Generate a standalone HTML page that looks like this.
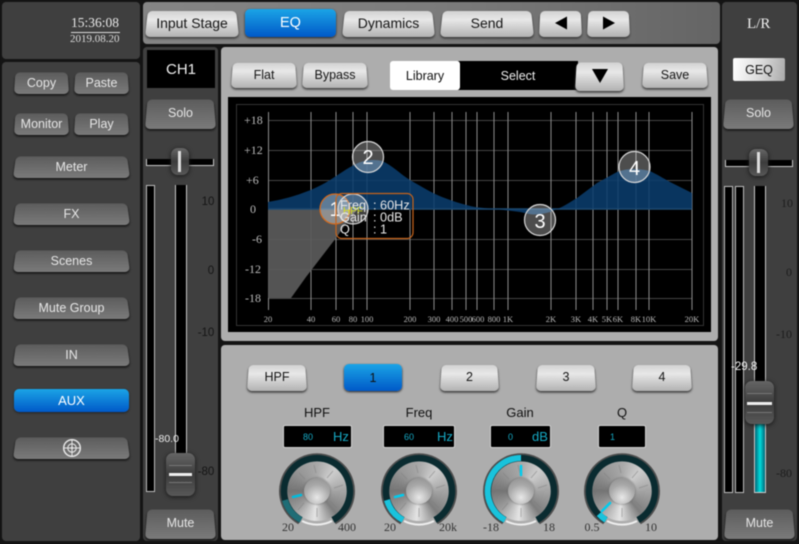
<!DOCTYPE html>
<html><head><meta charset="utf-8"><style>
html,body{margin:0;padding:0;background:#141414}
body{position:relative;width:799px;height:544px;overflow:hidden;font-family:"Liberation Sans",sans-serif;filter:blur(.4px)}
.p{position:absolute;border-radius:4px;background:#3f3f3f}
.l{background:#adadad}
.b{position:absolute;display:flex;align-items:center;justify-content:center;color:#e6e6e6;font-size:12.5px;z-index:1}
.b::before{content:"";position:absolute;inset:0;z-index:-1;border-radius:5px;background:linear-gradient(#5c5c5c,#7a7a7a);box-shadow:0 1.5px 2px #111;transform:perspective(60px) rotateX(8deg);transform-origin:bottom}
.w{color:#151515;font-size:14px}
.w::before{background:linear-gradient(#d2d2d2,#e8e8e8 35%,#b2b2b2);box-shadow:0 1.5px 2px #333}
.blue{color:#fff;border-radius:5px;background:linear-gradient(#1ba4e6,#0059c8);box-shadow:0 1px 2px #222}
.blue::before,.g::before{display:none}
.t{position:absolute;white-space:nowrap}
.s{font-family:"Liberation Serif",serif}
.pan{position:absolute;background:#000;border:1px solid #c8c8c8;border-top:0;box-sizing:border-box}
.tr{position:absolute;background:#000;border:solid #c8c8c8;border-width:0 1px;box-sizing:border-box}
.m{position:absolute;background:#000;border:1px solid #bcbcbc;box-sizing:border-box}
.sc{font-size:12px;color:#333;font-family:"Liberation Serif",serif;position:absolute;width:40px;text-align:center}
.sl{font-size:11.5px;color:#151515;font-family:"Liberation Sans",sans-serif}
.sr{color:#1c1c1c}
.th{position:absolute;border-radius:7px;background:linear-gradient(#666,#3c3c3c 50%,#585858);box-shadow:0 1px 5px #161616}
.d{position:absolute;background:#000;border:1px solid #cfcfcf;border-radius:2px;box-sizing:border-box;height:23px;color:#16a9c4}
.lab{position:absolute;font-size:13px;color:#111;text-align:center;width:60px}
.kn{position:absolute;width:60px;height:60px;border-radius:50%;background:conic-gradient(#a8a8a8,#cdcdcd 40deg,#9c9c9c 100deg,#7e7e7e 140deg,#e4e4e4 185deg,#9a9a9a 230deg,#747474 270deg,#989898 320deg,#a8a8a8)}
.kn::after{content:"";position:absolute;left:17px;top:17px;width:26px;height:26px;border-radius:50%;background:radial-gradient(circle at 50% 75%,#e8e8e8,#a8a8a8 55%,#8c8c8c);box-shadow:0 0 2px #666}
.ks{position:absolute;width:84px;height:84px}
</style></head><body>
<div class="p" style="left:2px;top:2px;width:138px;height:57px"></div>
<div class="t s" style="left:71px;top:15px;font-size:13.5px;color:#e8e8e8">15:36:08</div>
<div style="position:absolute;left:71px;top:32px;width:49px;height:1px;background:#ddd"></div>
<div class="t s" style="left:70px;top:33px;font-size:11px;color:#ddd">2019.08.20</div>
<div class="p" style="left:2px;top:62px;width:138px;height:479px"></div>
<div class="b" style="left:14px;top:71px;width:55px;height:23px">Copy</div>
<div class="b" style="left:74px;top:71px;width:55px;height:23px">Paste</div>
<div class="b" style="left:14px;top:112px;width:55px;height:23px">Monitor</div>
<div class="b" style="left:74px;top:112px;width:55px;height:23px">Play</div>
<div class="b" style="left:13px;top:155px;width:117px;height:23px">Meter</div>
<div class="b" style="left:13px;top:202px;width:117px;height:23px">FX</div>
<div class="b" style="left:13px;top:249px;width:117px;height:23px">Scenes</div>
<div class="b" style="left:13px;top:296px;width:117px;height:23px">Mute Group</div>
<div class="b" style="left:13px;top:343px;width:117px;height:23px">IN</div>
<div class="b blue" style="left:14px;top:389px;width:115px;height:23px;font-size:13px">AUX</div>
<div class="b" style="left:13px;top:436px;width:117px;height:23px">
<svg width="20" height="20" viewBox="0 0 20 20" fill="none" stroke="#e6e6e6"><circle cx="10" cy="10" r="8.3" stroke-width="1.5"/><circle cx="10" cy="10" r="4.2" stroke-width="1.1"/><path d="M10 1v18M1 10h18" stroke-width="1"/><circle cx="10" cy="10" r="1.2" fill="#e6e6e6" stroke="none"/></svg></div>

<div class="p" style="left:143px;top:2px;width:577px;height:42px;background:linear-gradient(90deg,#858585,#7c7c7c 50%,#656565)"></div>
<div class="b w" style="left:145px;top:9px;width:94px;height:28px">Input Stage</div>
<div class="b blue" style="left:245px;top:9px;width:91px;height:28px;font-size:14.5px">EQ</div>
<div class="b w" style="left:342px;top:9px;width:93px;height:28px">Dynamics</div>
<div class="b w" style="left:440px;top:9px;width:94px;height:28px">Send</div>
<div class="b w" style="left:539px;top:9px;width:43px;height:28px"><svg width="14" height="14"><path d="M1 7L13 0.5V13.5Z" fill="#000"/></svg></div>
<div class="b w" style="left:587px;top:9px;width:43px;height:28px"><svg width="14" height="14"><path d="M13 7L1 0.5V13.5Z" fill="#000"/></svg></div>

<div class="p" style="left:143px;top:47px;width:75px;height:494px"></div>
<div style="position:absolute;left:147px;top:50px;width:68px;height:38px;background:#000;color:#eee;font-size:15px;display:flex;align-items:center;justify-content:center">CH1</div>
<div class="b" style="left:145px;top:97px;width:71px;height:32px">Solo</div>
<div class="pan" style="left:146px;top:159px;width:68px;height:7px"></div>
<div class="th" style="left:171px;top:148px;width:18px;height:27px"></div>
<div style="position:absolute;left:178px;top:151px;width:3px;height:21px;background:#ddd"></div>
<div class="m" style="left:146px;top:185px;width:9px;height:307px"></div>
<div class="tr" style="left:175px;top:185px;width:12px;height:270px"></div>
<div class="t" style="left:155px;top:433px;font-size:10.5px;color:#eee">-80.0</div>
<div class="sc sl" style="left:188px;top:196px">10</div>
<div class="sc sl" style="left:191px;top:265px">0</div>
<div class="sc sl" style="left:186px;top:327px">-10</div>
<div class="sc sl" style="left:186px;top:466px">-80</div>
<div class="th" style="left:166px;top:453px;width:29px;height:43px"></div>
<div style="position:absolute;left:169px;top:473px;width:23px;height:3px;background:#eee"></div>
<div style="position:absolute;left:169px;top:465px;width:23px;height:1px;background:#777"></div>
<div style="position:absolute;left:169px;top:482px;width:23px;height:1px;background:#777"></div>
<div class="b" style="left:145px;top:507px;width:71px;height:32px">Mute</div>

<div class="p l" style="left:221px;top:47px;width:497px;height:294px"></div>
<div class="b w" style="left:231px;top:61px;width:66px;height:27px;font-size:12.5px">Flat</div>
<div class="b w" style="left:302px;top:61px;width:66px;height:27px;font-size:12.5px">Bypass</div>
<div style="position:absolute;left:390px;top:61px;width:70px;height:29px;background:#fff;border-radius:3px;color:#111;font-size:12.5px;display:flex;align-items:center;justify-content:center;z-index:1">Library</div>
<div style="position:absolute;left:458px;top:61px;width:120px;height:29px;background:#000;color:#eee;font-size:12.5px;display:flex;align-items:center;justify-content:center">Select</div>
<div class="b w" style="left:575px;top:60px;width:49px;height:31px"><svg width="18" height="16"><path d="M1 1H17L9 15Z" fill="#000"/></svg></div>
<div class="b w" style="left:642px;top:61px;width:66px;height:27px;font-size:12.5px">Save</div>

<svg style="position:absolute;left:228px;top:97px" width="483" height="235" viewBox="228 97 483 235">
<rect x="228" y="97" width="483" height="235" fill="#000"/>
<rect x="236.5" y="104.5" width="467" height="221" fill="none" stroke="#333"/>
<g stroke="#444" stroke-width="1">
<path d="M268 120.5H692M268 150.5H692M268 180.5H692M268 239.5H692M268 269.5H692M268 298.5H692"/>
</g>
<g stroke="#8c8c8c" stroke-width="1">
<path d="M268.5 112V310M311 112V310M336 112V310M353 112V310M367 112V310M410 112V310M434 112V310M452 112V310M466 112V310M477 112V310M494 112V310M508 112V310M551 112V310M576 112V310M593 112V310M607 112V310M618 112V310M636 112V310M649 112V310M692 112V310"/>
</g>
<path d="M268 209V298H291L306 277L336 238L350 218L358 209Z" fill="#5a5a5a" fill-opacity=".93"/>
<path d="M268 209V202C285 199 305 194 325 183C337 176 347 168 358 163C365 160 375 159 382 161C392 165 400 174 410 180C422 187 432 193 442 197C455 202 465 205 475 207L493 209C505 210 512 211 520 212C526 213 530 214.5 534 214.5C540 214.5 546 213 550 212L557 209C565 206 570 202 577 198L597 183L617 172C622 170 628 169 633 169C640 169 645 170 650 171C658 175 663 178 670 182L692 193V209Z" fill="#0a3c6c" fill-opacity=".88"/>
<path d="M268 209H692" stroke="#1d4a72" stroke-width="1.5"/>
<g font-family="Liberation Serif,serif" font-size="12" fill="#bbb">
<text x="244" y="124">+18</text><text x="244" y="154">+12</text><text x="246" y="184">+6</text><text x="250" y="213">0</text><text x="252" y="243">-6</text><text x="245" y="273">-12</text><text x="245" y="302">-18</text>
</g>
<g font-family="Liberation Serif,serif" font-size="8.5" fill="#b8b8b8" text-anchor="middle">
<text x="268" y="322">20</text><text x="311" y="322">40</text><text x="336" y="322">60</text><text x="353" y="322">80</text><text x="367" y="322">100</text><text x="410" y="322">200</text><text x="434" y="322">300</text><text x="452" y="322">400</text><text x="466" y="322">500</text><text x="478" y="322">600</text><text x="494" y="322">800</text><text x="508" y="322">1K</text><text x="551" y="322">2K</text><text x="576" y="322">3K</text><text x="593" y="322">4K</text><text x="607" y="322">5K</text><text x="618" y="322">6K</text><text x="636" y="322">8K</text><text x="649" y="322">10K</text><text x="692" y="322">20K</text>
</g>
<g fill="#fff" fill-opacity=".3" stroke="#d8d8d8" stroke-width="1.2">
<circle cx="368" cy="157" r="15.5"/><circle cx="540" cy="220" r="15.5"/><circle cx="634.5" cy="167" r="15.5"/>
</g>
<g fill="#fff" font-size="20" text-anchor="middle"><text x="368" y="164">2</text><text x="540" y="228">3</text><text x="634.5" y="175">4</text></g>
<circle cx="335" cy="209" r="15" fill="#fff" fill-opacity=".35" stroke="#d86a1a" stroke-width="1.2"/>
<text x="335" y="216" fill="#fff" font-size="20" text-anchor="middle">1</text>
<circle cx="353" cy="209" r="15" fill="#fff" fill-opacity=".25" stroke="#d8d8d8" stroke-width="1.2"/>
<text x="353" y="214" fill="#d8e21a" font-size="10" text-anchor="middle">HPF</text>
<rect x="336" y="193.5" width="77" height="45" rx="6" fill="none" stroke="#c8641a" stroke-width="1.2"/>
<g fill="#e8e8e8" font-size="12.7"><text x="340" y="209.5">Freq</text><text x="340" y="221.5">Gain</text><text x="340" y="233.5">Q</text><text x="373" y="209.5">: 60Hz</text><text x="373" y="221.5">: 0dB</text><text x="373" y="233.5">: 1</text></g>
</svg>

<div class="p l" style="left:221px;top:345px;width:497px;height:195px"></div>
<div class="b w" style="left:247px;top:363px;width:60px;height:28px;font-size:12.5px">HPF</div>
<div class="b blue" style="left:344px;top:364px;width:58px;height:27px;color:#111">1</div>
<div class="b w" style="left:440px;top:363px;width:59px;height:28px;font-size:12.5px">2</div>
<div class="b w" style="left:536px;top:363px;width:60px;height:28px;font-size:12.5px">3</div>
<div class="b w" style="left:632px;top:363px;width:60px;height:28px;font-size:12.5px">4</div>
<div class="lab" style="left:287px;top:405px">HPF</div>
<div class="lab" style="left:389px;top:405px">Freq</div>
<div class="lab" style="left:490px;top:405px">Gain</div>
<div class="lab" style="left:592px;top:405px">Q</div>
<div class="d" style="left:283px;top:425px;width:69px"><span class="t" style="left:19px;top:6px;font-size:9px">80</span><span class="t" style="left:49px;top:3px;font-size:13px">Hz</span></div>
<div class="d" style="left:383px;top:425px;width:72px"><span class="t" style="left:20px;top:6px;font-size:9px">60</span><span class="t" style="left:53px;top:3px;font-size:13px">Hz</span></div>
<div class="d" style="left:490px;top:425px;width:61px"><span class="t" style="left:17px;top:6px;font-size:9px">0</span><span class="t" style="left:41px;top:3px;font-size:13px">dB</span></div>
<div class="d" style="left:598px;top:425px;width:48px"><span class="t" style="left:11px;top:6px;font-size:9px">1</span></div>

<svg width="0" height="0" style="position:absolute"><defs>
<symbol id="k" viewBox="-42 -42 84 84">
<path d="M-18 32A36.5 36.5 0 1 1 18 32" fill="none" stroke="#000" stroke-opacity=".55" stroke-width="3"/>
<path d="M-16 29A33 33 0 1 1 16 29" fill="none" stroke="#0a2b30" stroke-width="6.5"/>
<path d="M-15 30A33 33 0 0 0 15 30" fill="none" stroke="#eee" stroke-width="2"/>
<g stroke="#808080" stroke-width="1" stroke-opacity=".5"><path d="M-25 -3H-17M-18 -18L-12 -12M-3 -26L-1 -18M16 -20L10 -13M26 -6L17 -3M20 17L13 10M0 26V17M-19 19L-13 12"/></g>
</symbol></defs></svg>
<div class="kn" style="left:287px;top:461px"></div><svg class="ks" style="left:275px;top:449px"><use href="#k" width="84" height="84"/><path d="M26 71A33 33 0 0 1 10 51" fill="none" stroke="#1f6d76" stroke-width="6"/><path d="M18 48L26 46" stroke="#0bd" stroke-width="2.5" stroke-linecap="round"/></svg>
<div class="kn" style="left:389px;top:461px"></div><svg class="ks" style="left:377px;top:449px"><use href="#k" width="84" height="84"/><path d="M26 71A33 33 0 0 1 10 51" fill="none" stroke="#19c3dc" stroke-width="6"/><path d="M18 48L26 46" stroke="#0ce" stroke-width="2.5" stroke-linecap="round"/></svg>
<div class="kn" style="left:491px;top:461px"></div><svg class="ks" style="left:479px;top:449px"><use href="#k" width="84" height="84"/><path d="M26 71A33 33 0 0 1 42 9" fill="none" stroke="#19c3dc" stroke-width="6"/><path d="M42 17V26" stroke="#0ce" stroke-width="2.5" stroke-linecap="round"/></svg>
<div class="kn" style="left:592px;top:461px"></div><svg class="ks" style="left:580px;top:449px"><use href="#k" width="84" height="84"/><path d="M26 71A33 33 0 0 1 19 65" fill="none" stroke="#19c3dc" stroke-width="6"/><path d="M22 62L30 54" stroke="#0ce" stroke-width="2.5" stroke-linecap="round"/></svg>
<div class="sc" style="left:268px;top:520px">20</div>
<div class="sc" style="left:327px;top:520px">400</div>
<div class="sc" style="left:370px;top:520px">20</div>
<div class="sc" style="left:428px;top:520px">20k</div>
<div class="sc" style="left:471px;top:520px">-18</div>
<div class="sc" style="left:529px;top:520px">18</div>
<div class="sc" style="left:572px;top:520px">0.5</div>
<div class="sc" style="left:631px;top:520px">10</div>

<div class="p" style="left:722px;top:2px;width:75px;height:539px"></div>
<div class="t s" style="left:747px;top:16px;font-size:15px;color:#eee">L/R</div>
<div class="b g" style="left:733px;top:58px;width:52px;height:23px;color:#111;font-size:12.5px;border-radius:2px;background:linear-gradient(100deg,#fff,#ddd 50%,#aaa)">GEQ</div>
<div class="b" style="left:723px;top:97px;width:71px;height:32px">Solo</div>
<div class="pan" style="left:725px;top:160px;width:68px;height:7px"></div>
<div class="th" style="left:749px;top:149px;width:19px;height:27px"></div>
<div style="position:absolute;left:757px;top:152px;width:3px;height:21px;background:#ddd"></div>
<div class="m" style="left:724px;top:186px;width:9px;height:307px"></div>
<div class="m" style="left:735px;top:186px;width:9px;height:307px"></div>
<div class="tr" style="left:754px;top:186px;width:12px;height:200px"></div>
<div style="position:absolute;left:754px;top:424px;width:12px;height:69px;box-sizing:border-box;border:1px solid #ccc;border-top:0;background:linear-gradient(90deg,#067,#0dd 50%,#067)"></div>
<div class="t" style="left:731px;top:361px;font-size:11.5px;color:#eee">-29.8</div>
<div class="sc sr" style="left:767px;top:196px">10</div>
<div class="sc sr" style="left:769px;top:265px">0</div>
<div class="sc sr" style="left:764px;top:327px">-10</div>
<div class="sc sr" style="left:764px;top:466px">-80</div>
<div class="th" style="left:745px;top:381px;width:29px;height:43px"></div>
<div style="position:absolute;left:747px;top:402px;width:25px;height:3px;background:#eee"></div>
<div style="position:absolute;left:747px;top:393px;width:25px;height:1px;background:#777"></div>
<div style="position:absolute;left:747px;top:412px;width:25px;height:1px;background:#777"></div>
<div class="b" style="left:724px;top:507px;width:71px;height:32px">Mute</div>
</body></html>
